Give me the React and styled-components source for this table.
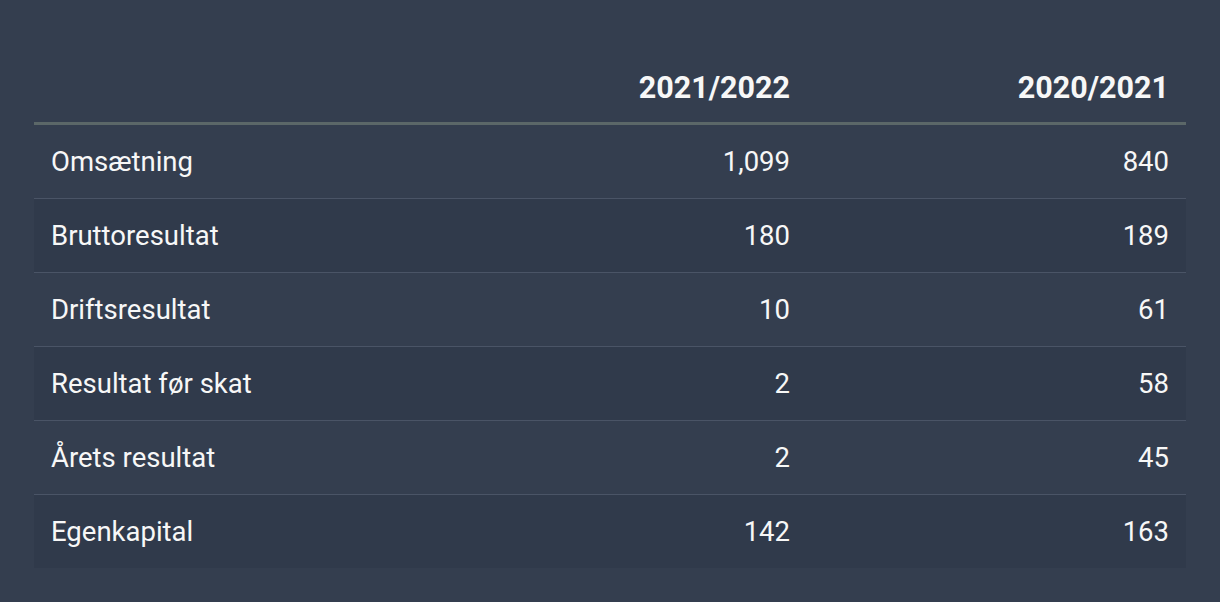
import React from "react";
import styled, { createGlobalStyle } from "styled-components";

const GlobalStyle = createGlobalStyle`
  html, body {
    margin: 0;
    padding: 0;
    background-color: #343e4f;
  }
  body {
    font-family: Roboto, "Liberation Sans", Arial, sans-serif;
  }
`;

const Page = styled.div`
  width: 1220px;
  height: 602px;
  padding: 54px 34px 0;
  box-sizing: border-box;
  background-color: #343e4f;
`;

const Table = styled.table`
  width: 100%;
  border-collapse: collapse;
  table-layout: fixed;
  color: #f7f7f7;
`;

const HeadCell = styled.th`
  height: 69px;
  padding: 0 ${(p) => p.$padRight || "17px"} 0 17px;
  font-size: 30.5px;
  font-weight: 700;
  text-align: ${(p) => (p.$right ? "right" : "left")};
  vertical-align: middle;
  border-bottom: 3.5px solid #5b6768;
  width: ${(p) => p.$width || "auto"};
  box-sizing: border-box;
`;

const Row = styled.tr`
  background-color: ${(p) => (p.$striped ? "#303a4b" : "transparent")};
  border-bottom: 1px solid ${(p) => (p.$last ? "transparent" : "#4a5466")};
`;

const Cell = styled.td`
  height: 73px;
  padding: 0 ${(p) => p.$padRight || "17px"} 0 17px;
  font-size: 27.5px;
  font-weight: 400;
  text-align: ${(p) => (p.$right ? "right" : "left")};
  vertical-align: middle;
  white-space: nowrap;
`;

const rows = [
  ["Omsætning", "1,099", "840"],
  ["Bruttoresultat", "180", "189"],
  ["Driftsresultat", "10", "61"],
  ["Resultat før skat", "2", "58"],
  ["Årets resultat", "2", "45"],
  ["Egenkapital", "142", "163"],
];

export default function App() {
  return (
    <>
      <GlobalStyle />
      <Page>
        <Table>
          <thead>
            <tr>
              <HeadCell />
              <HeadCell $right $width="378px" $padRight="18px">2021/2022</HeadCell>
              <HeadCell $right $width="378px">2020/2021</HeadCell>
            </tr>
          </thead>
          <tbody>
            {rows.map(([label, a, b], i) => (
              <Row key={label} $striped={i % 2 === 1} $last={i === rows.length - 1}>
                <Cell>{label}</Cell>
                <Cell $right $padRight="18px">{a}</Cell>
                <Cell $right>{b}</Cell>
              </Row>
            ))}
          </tbody>
        </Table>
      </Page>
    </>
  );
}
